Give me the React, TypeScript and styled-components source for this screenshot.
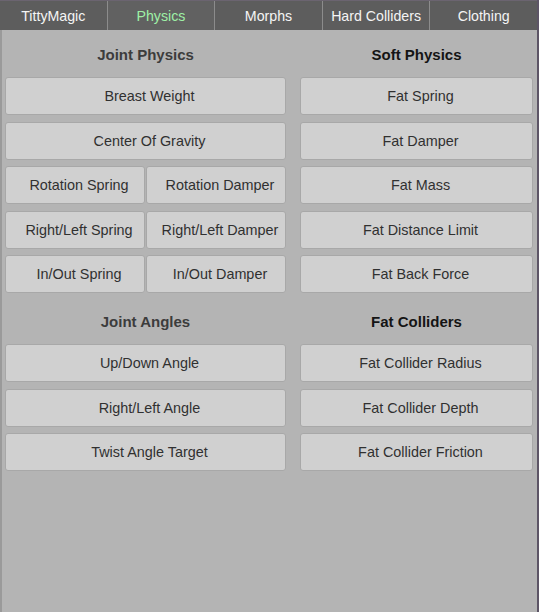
import React from "react";
import styled, { createGlobalStyle } from "styled-components";

const GlobalStyle = createGlobalStyle`
  html, body {
    margin: 0;
    padding: 0;
    background: #5d5566;
    font-family: "Liberation Sans", Arial, sans-serif;
  }
`;

const tabs = ["TittyMagic", "Physics", "Morphs", "Hard Colliders", "Clothing"];

type Item = string | [string, string];

const sections: { left: { title: string; dark?: boolean; items: Item[] }; right: { title: string; dark?: boolean; items: Item[] } }[] = [
  {
    left: {
      title: "Joint Physics",
      items: [
        "Breast Weight",
        "Center Of Gravity",
        ["Rotation Spring", "Rotation Damper"],
        ["Right/Left Spring", "Right/Left Damper"],
        ["In/Out Spring", "In/Out Damper"],
      ],
    },
    right: {
      title: "Soft Physics",
      dark: true,
      items: ["Fat Spring", "Fat Damper", "Fat Mass", "Fat Distance Limit", "Fat Back Force"],
    },
  },
  {
    left: {
      title: "Joint Angles",
      items: ["Up/Down Angle", "Right/Left Angle", "Twist Angle Target"],
    },
    right: {
      title: "Fat Colliders",
      dark: true,
      items: ["Fat Collider Radius", "Fat Collider Depth", "Fat Collider Friction"],
    },
  },
];

const Window = styled.div`
  width: 537px;
  height: 612px;
  display: flex;
  flex-direction: column;
  background: #b4b4b4;
`;

const TabBar = styled.div`
  display: flex;
  flex-shrink: 0;
  height: 30px;
  background: #5d5d5d;
  border-top: 1px solid #6b6470;
  box-sizing: border-box;
`;

const Tab = styled.div<{ $active?: boolean }>`
  flex: 1;
  display: flex;
  align-items: center;
  justify-content: center;
  font-size: 14.2px;
  color: ${(p) => (p.$active ? "#9ef0a6" : "#f4f4f4")};
  background: ${(p) => (p.$active ? "#616161" : "#5d5d5d")};
  & + & {
    border-left: 1px solid #8c8c8c;
  }
`;

const Panel = styled.div`
  flex: 1;
  border-left: 2px solid #9a9a9a;
  padding: 0 2px 0 3px;
  display: flex;
  flex-direction: column;
  gap: 4px;
`;

const Section = styled.div`
  display: grid;
  grid-template-columns: 281px 233px;
  column-gap: 14px;
`;

const Column = styled.div`
  display: flex;
  flex-direction: column;
  gap: 6.5px;
`;

const Header = styled.div<{ $dark?: boolean }>`
  height: 40.5px;
  padding-top: 16px;
  box-sizing: border-box;
  text-align: center;
  font-size: 15px;
  font-weight: bold;
  line-height: 18px;
  color: ${(p) => (p.$dark ? "#141414" : "#3c3c3c")};
`;

const Row = styled.div`
  display: flex;
  gap: 1px;
  & > div {
    flex: 1;
  }
`;

const Button = styled.div`
  height: 38px;
  flex-shrink: 0;
  box-sizing: border-box;
  padding-left: 8px;
  display: flex;
  align-items: center;
  justify-content: center;
  background: #d0d0d0;
  border: 1px solid #a8a8a8;
  border-radius: 3px;
  font-size: 14.4px;
  color: #303030;
`;

function ButtonColumn({ title, dark, items }: { title: string; dark?: boolean; items: Item[] }) {
  return (
    <Column>
      <Header $dark={dark}>{title}</Header>
      {items.map((item) =>
        typeof item === "string" ? (
          <Button key={item}>{item}</Button>
        ) : (
          <Row key={item[0]}>
            <Button>{item[0]}</Button>
            <Button>{item[1]}</Button>
          </Row>
        )
      )}
    </Column>
  );
}

export default function App() {
  return (
    <>
      <GlobalStyle />
      <Window>
        <TabBar>
          {tabs.map((t) => (
            <Tab key={t} $active={t === "Physics"}>
              {t}
            </Tab>
          ))}
        </TabBar>
        <Panel>
          {sections.map((s) => (
            <Section key={s.left.title}>
              <ButtonColumn {...s.left} />
              <ButtonColumn {...s.right} />
            </Section>
          ))}
        </Panel>
      </Window>
    </>
  );
}
